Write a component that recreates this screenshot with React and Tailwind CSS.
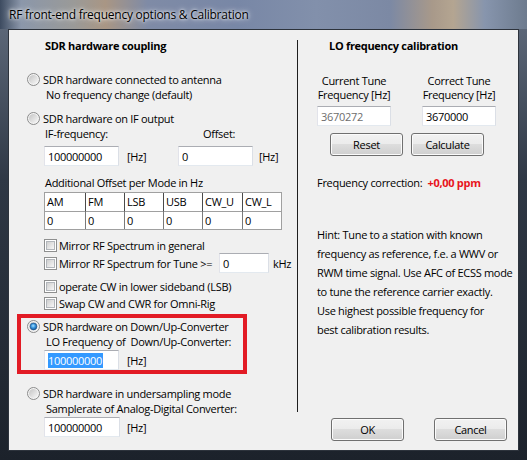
import React from "react";

function Radio({ checked }) {
  return (
    <svg width="13" height="13" viewBox="0 0 13 13" className="shrink-0">
      <defs>
        <linearGradient id="radioIn" x1="0" y1="0" x2="1" y2="1">
          <stop offset="0" stopColor="#c4c4c4" />
          <stop offset="1" stopColor="#f8f8f8" />
        </linearGradient>
        <radialGradient id="radioDot" cx="0.45" cy="0.4" r="0.65">
          <stop offset="0" stopColor="#a6e0ff" />
          <stop offset="0.45" stopColor="#3a97df" />
          <stop offset="1" stopColor="#0d4d8c" />
        </radialGradient>
      </defs>
      <circle cx="6.5" cy="6.5" r="6" fill="#f4f4f4" stroke="#8a8b8b" />
      <circle cx="6.5" cy="6.5" r="4.5" fill="url(#radioIn)" />
      {checked && (
        <circle cx="6.5" cy="6.5" r="3.4" fill="url(#radioDot)" stroke="#1d4f86" strokeWidth="0.6" />
      )}
    </svg>
  );
}

function Check() {
  return (
    <span className="flex h-[13px] w-[13px] shrink-0 border border-[#8e8f8f] bg-white p-px">
      <span className="flex-1 border border-[#b2b6bb] bg-[linear-gradient(135deg,#cfcfcf,#f7f7f7)]" />
    </span>
  );
}

function TB({ className, children }) {
  return (
    <div
      className={
        "flex h-[20px] shrink-0 items-center border border-[#abadb3] border-b-[#e3e9ef] border-l-[#e2e3ea] border-r-[#dbdfe6] bg-white pl-[3px] " +
        className
      }
    >
      {children}
    </div>
  );
}

function Btn({ children }) {
  return (
    <div className="flex h-[23px] w-[73px] shrink-0 items-center justify-center rounded-[3px] border border-[#707070] bg-[linear-gradient(to_bottom,#f2f2f2_0%,#ebebeb_50%,#dddddd_50%,#cfcfcf_100%)] shadow-[inset_0_0_0_1px_#fbfbfb]">
      {children}
    </div>
  );
}

const modes = ["AM", "FM", "LSB", "USB", "CW_U", "CW_L"];

export default function App() {
  return (
    <div className="flex h-[460px] w-[527px] flex-col overflow-hidden bg-[linear-gradient(90deg,#3d4b60_0%,#8b97aa_4%,#9a9a98_14%,#a99684_20%,#7f8ba6_28%,#7887a6_45%,#8290ab_60%,#7c89a4_74%,#a8998a_82%,#b4a591_86%,#8795ad_92%,#6d7b8e_100%)] font-['Open_Sans',sans-serif] text-[11px] tracking-[-0.3px] text-black">
      <div className="flex h-[29px] shrink-0 items-center pl-[9px] text-[12px] tracking-[-0.25px] [text-shadow:0_0_6px_#ffffff,0_0_3px_#ffffff]">
        RF front-end frequency options &amp; Calibration
      </div>
      <div className="flex flex-1 bg-[linear-gradient(to_bottom,#5b6677_0%,#2f3845_35%,#1c222b_100%)] px-[8px] pb-[9px]">
        <div className="flex h-[422px] w-[512px] border border-[#2d333c] bg-[#f0f0f0] leading-[15px] whitespace-nowrap">
          {/* left column */}
          <div className="flex w-[288px] shrink-0 flex-col">
            <div className="mt-[8px] h-[15px] pl-[36px] font-bold">SDR hardware coupling</div>

            <div className="mt-[19px] flex h-[15px] items-center gap-[3px] pl-[18px]">
              <Radio />
              <span>SDR hardware connected to antenna</span>
            </div>
            <div className="h-[15px] pl-[37px]">No frequency change (default)</div>

            <div className="mt-[9px] flex h-[15px] items-center gap-[3px] pl-[18px]">
              <Radio />
              <span>SDR hardware on IF output</span>
            </div>
            <div className="flex h-[15px] pl-[36px]">
              <span className="w-[158px]">IF-frequency:</span>
              <span>Offset:</span>
            </div>
            <div className="mt-[5px] flex h-[20px] items-center pl-[35px]">
              <TB className="w-[75px]">100000000</TB>
              <span className="ml-[8px] w-[51px]">[Hz]</span>
              <TB className="w-[75px]">0</TB>
              <span className="ml-[6px]">[Hz]</span>
            </div>

            <div className="mt-[9px] h-[15px] pl-[36px]">Additional Offset per Mode in Hz</div>
            <div className="ml-[35px] mt-[2px] grid h-[38px] w-[238px] grid-cols-[40px_39px_39px_39px_40px_1fr] border border-[#a0a0a0] bg-white">
              {modes.map((m, i) => (
                <div
                  key={m}
                  className={
                    "h-[19px] border-b border-[#a0a0a0] pl-[2px] leading-[18px] " +
                    (i > 0 ? "border-l border-l-[#4a4a4a]" : "")
                  }
                >
                  {m}
                </div>
              ))}
              {modes.map((m, i) => (
                <div
                  key={m + "v"}
                  className={"h-[17px] pl-[2px] leading-[17px] " + (i > 0 ? "border-l border-[#7a7a7a]" : "")}
                >
                  0
                </div>
              ))}
            </div>

            <div className="mt-[8px] flex h-[15px] items-center gap-[2px] pl-[35px]">
              <Check />
              <span>Mirror RF Spectrum in general</span>
            </div>
            <div className="flex h-[20px] items-center pl-[35px]">
              <Check />
              <span className="ml-[2px] w-[160px]">Mirror RF Spectrum for Tune &gt;=</span>
              <TB className="w-[50px]">0</TB>
              <span className="ml-[4px]">kHz</span>
            </div>
            <div className="mt-[6px] flex h-[15px] items-center gap-[2px] pl-[35px]">
              <Check />
              <span>operate CW in lower sideband (LSB)</span>
            </div>
            <div className="mt-[2px] flex h-[15px] items-center gap-[2px] pl-[35px]">
              <Check />
              <span>Swap CW and CWR for Omni-Rig</span>
            </div>

            <div className="ml-[8px] mt-[3px] flex w-[230px] flex-col border-4 border-[#e21b25]">
              <div className="mt-[1px] flex h-[15px] items-center gap-[3px] pl-[6px]">
                <Radio checked />
                <span>SDR hardware on Down/Up-Converter</span>
              </div>
              <div className="h-[15px] pl-[25px] whitespace-pre">LO Frequency of  Down/Up-Converter:</div>
              <div className="mt-[1px] flex h-[20px] items-center pl-[23px]">
                <TB className="w-[75px]">
                  <span className="bg-[#3399ff] pr-px text-white">100000000</span>
                </TB>
                <span className="ml-[8px]">[Hz]</span>
              </div>
            </div>

            <div className="mt-[12px] flex h-[15px] items-center gap-[3px] pl-[18px]">
              <Radio />
              <span>SDR hardware in undersampling mode</span>
            </div>
            <div className="h-[15px] pl-[37px]">Samplerate of Analog-Digital Converter:</div>
            <div className="mt-[1px] flex h-[20px] items-center pl-[35px]">
              <TB className="w-[76px]">100000000</TB>
              <span className="ml-[7px]">[Hz]</span>
            </div>
          </div>

          {/* divider */}
          <div className="mt-[10px] h-[372px] w-px shrink-0 bg-[#1e1e1e]" />

          {/* right column */}
          <div className="flex flex-1 flex-col">
            <div className="mt-[8px] h-[15px] pl-[31px] font-bold">LO frequency calibration</div>

            <div className="mt-[21px] flex gap-[31px] pl-[19px] leading-[14px]">
              <div className="flex w-[74px] flex-col items-center">
                <span>Current Tune</span>
                <span>Frequency [Hz]</span>
              </div>
              <div className="flex w-[74px] flex-col items-center">
                <span>Correct Tune</span>
                <span>Frequency [Hz]</span>
              </div>
            </div>
            <div className="mt-[4px] flex gap-[31px] pl-[19px]">
              <TB className="w-[74px] text-[#6d6d6d]">3670272</TB>
              <TB className="w-[74px]">3670000</TB>
            </div>
            <div className="mt-[7px] flex gap-[8px] pl-[32px]">
              <Btn>Reset</Btn>
              <Btn>Calculate</Btn>
            </div>

            <div className="mt-[19px] flex h-[15px] pl-[19px] whitespace-pre">
              <span>Frequency correction:  </span>
              <span className="font-bold text-[#e8141c]">+0,00 ppm</span>
            </div>

            <div className="mt-[35px] pl-[19px] leading-[19px]">
              <div>Hint: Tune to a station with known</div>
              <div>frequency as reference, f.e. a WWV or</div>
              <div>RWM time signal. Use AFC of ECSS mode</div>
              <div>to tune the reference carrier exactly.</div>
              <div>Use highest possible frequency for</div>
              <div>best calibration results.</div>
            </div>

            <div className="mb-[9px] mt-auto flex gap-[30px] pl-[33px]">
              <Btn>OK</Btn>
              <Btn>Cancel</Btn>
            </div>
          </div>
        </div>
      </div>
    </div>
  );
}
